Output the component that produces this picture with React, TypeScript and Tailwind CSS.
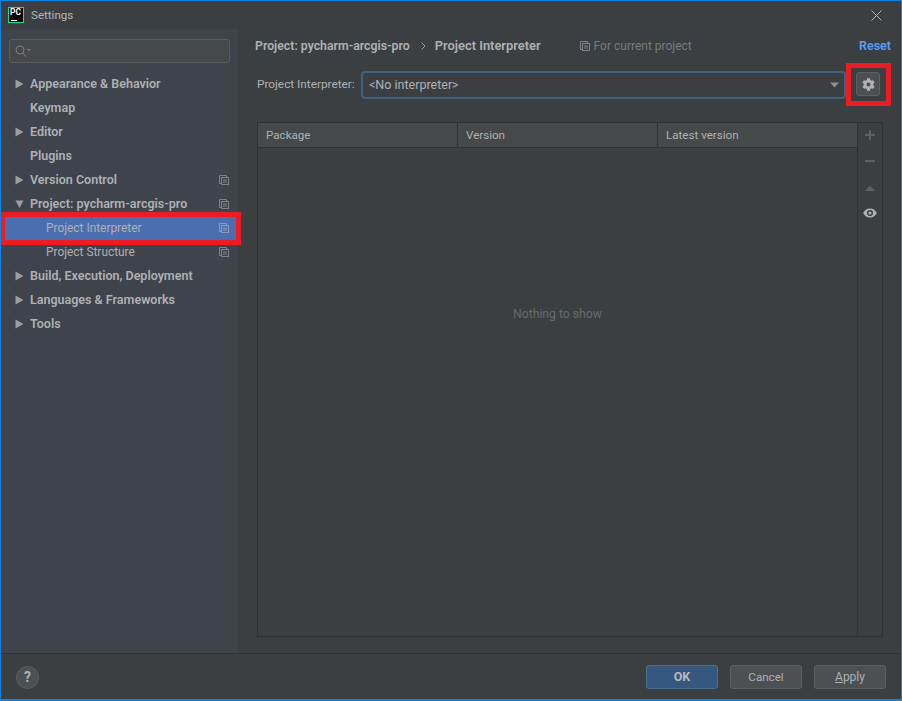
// App.tsx
import { FaCog } from "react-icons/fa";

function CopyIcon({ className = "text-[#7f8387]" }: { className?: string }) {
  return (
    <svg className={className} width="10" height="10" viewBox="0 0 10 10" fill="none" stroke="currentColor" strokeWidth="1">
      <path d="M2.5 8.5h-2v-8h7v2" />
      <rect x="2.5" y="2.5" width="7" height="7" />
      <path d="M4 5h4M4 7h4" />
    </svg>
  );
}

function Arrow({ open }: { open?: boolean }) {
  return (
    <svg width="9" height="10" viewBox="0 0 9 10" fill="#9da0a2">
      {open ? <path d="M0.500 1.500h8L4.500 9z" /> : <path d="M0.500 0.500v9L8.500 5z" />}
    </svg>
  );
}

const tree = [
  { label: "Appearance & Behavior", arrow: true },
  { label: "Keymap" },
  { label: "Editor", arrow: true },
  { label: "Plugins" },
  { label: "Version Control", arrow: true, copy: true },
  { label: "Project: pycharm-arcgis-pro", arrow: true, open: true, copy: true },
  { label: "Project Interpreter", child: true, copy: true, selected: true },
  { label: "Project Structure", child: true, copy: true },
  { label: "Build, Execution, Deployment", arrow: true },
  { label: "Languages & Frameworks", arrow: true },
  { label: "Tools", arrow: true },
];

export default function App() {
  return (
    <div className="relative w-[902px] h-[701px] flex flex-col bg-[#3c3f41] border border-[#0a84e0] border-b-2 text-[12.5px] text-[#afb1b3] font-['Roboto','Noto_Sans',sans-serif] overflow-hidden">
      {/* title bar */}
      <div className="h-[28px] shrink-0 flex items-center pl-[7px] pr-[19px]">
        <div className="relative w-[16px] h-[16px] bg-black border border-[#21d789] shrink-0 overflow-hidden">
          <span className="absolute left-[1px] top-0 text-[8.500px] leading-[9px] font-bold text-white">PC</span>
          <div className="absolute left-[2px] bottom-[1px] w-[6px] h-[1px] bg-white" />
        </div>
        <span className="ml-[7px] mt-[1px] text-[11.6px] text-[#b4b6b8]">Settings</span>
        <svg className="ml-auto" width="11" height="11" viewBox="0 0 11 11" stroke="#b5b7b9" strokeWidth="1" fill="none">
          <path d="M0.500 0.500l10 10M10.500 0.500l-10 10" />
        </svg>
      </div>

      <div className="flex-1 flex min-h-0">
        {/* sidebar */}
        <aside className="w-[237px] shrink-0 bg-[#3e434c] flex flex-col">
          <div className="mt-[10px] mb-[9px] ml-[8px] w-[221px] h-[24px] rounded-[3px] border border-[#5a5d5f] bg-[#45494a] flex items-center pl-[5px]">
            <svg width="16" height="13" viewBox="0 0 16 13" fill="none" stroke="#7b7e80" strokeWidth="1">
              <circle cx="5" cy="5" r="4" />
              <path d="M8 8l3 4" />
              <path d="M12 4h4l-2 2.500z" fill="#7b7e80" stroke="none" />
            </svg>
          </div>
          {tree.map((item) => (
            <div
              key={item.label}
              className={`h-[24px] flex items-center pr-[9px] ${item.selected ? "bg-[#4b6eaf]" : ""} ${item.child ? "pl-[45px] font-normal text-[11.9px]" : "pl-[14px] font-semibold"}`}
            >
              {!item.child && (
                <span className="w-[15px] shrink-0 flex">{item.arrow && <Arrow open={item.open} />}</span>
              )}
              <span className={`whitespace-nowrap ${item.child ? "pt-[1px]" : ""}`}>{item.label}</span>
              {item.copy && (
                <span className="ml-auto flex">
                  <CopyIcon className={item.selected ? "text-[#8a9bbd]" : "text-[#7f8387]"} />
                </span>
              )}
            </div>
          ))}
        </aside>

        {/* main */}
        <main className="flex-1 flex flex-col pl-[17px] pr-[10px] min-w-0">
          <div className="h-[34px] flex items-center">
            <span className="text-[12.3px] font-semibold whitespace-nowrap">Project: pycharm-arcgis-pro</span>
            <svg className="ml-[11px]" width="5" height="8" viewBox="0 0 5 8" fill="none" stroke="#9a9c9e">
              <path d="M0.500 0.500l3.500 3.500-3.500 3.500" />
            </svg>
            <span className="ml-[9px] text-[12.9px] font-semibold whitespace-nowrap">Project Interpreter</span>
            <span className="ml-[39px] flex"><CopyIcon /></span>
            <span className="ml-[4px] text-[12px] text-[#787a7c] whitespace-nowrap">For current project</span>
            <span className="ml-auto font-semibold text-[#589df6]">Reset</span>
          </div>

          <div className="mt-[8px] flex items-center h-[28px]">
            <span className="ml-[2px] w-[98px] text-[11.8px] whitespace-nowrap">Project Interpreter:</span>
            <div className="ml-[6px] w-[485px] h-[28px] rounded-[4px] border-2 border-[#3d6185] bg-[#3c3f41] flex items-center pl-[6px] pr-[5px]">
              <span>&lt;No interpreter&gt;</span>
              <svg className="ml-auto" width="9" height="6" viewBox="0 0 9 6" fill="#8b8e90">
                <path d="M0 0.500h9L4.500 5.500z" />
              </svg>
            </div>
            <div className="ml-[10px] mb-[2px] w-[24px] h-[24px] rounded-[3px] border border-[#5e6060] bg-[#4c5052] flex items-center justify-center">
              <FaCog className="text-[#afb1b3] text-[13px]" />
            </div>
          </div>

          {/* package table */}
          <div className="mt-[23px] ml-[2px] h-[515px] w-[626px] border border-[#2f3133] flex">
            <div className="flex-1 flex flex-col min-w-0">
              <div className="h-[25px] shrink-0 flex bg-[#45494a] border-b border-[#323232] text-[11.6px]">
                <div className="w-[200px] pl-[8px] pt-[1px] flex items-center border-r border-[#323232]">Package</div>
                <div className="w-[200px] pl-[8px] pt-[1px] flex items-center border-r border-[#323232]">Version</div>
                <div className="flex-1 pl-[8px] pt-[1px] flex items-center">Latest version</div>
              </div>
              <div className="flex-1 flex items-center justify-center pb-[155px] text-[12.2px] text-[#696b6d]">Nothing to show</div>
            </div>
            <div className="w-[25px] shrink-0 border-l border-[#323232] flex flex-col items-center pt-[6px] gap-[14px]">
              <svg width="12" height="12" viewBox="0 0 12 12" stroke="#5e6163" strokeWidth="2">
                <path d="M6 1v10M1 6h10" />
              </svg>
              <svg width="12" height="12" viewBox="0 0 12 12" stroke="#5e6163" strokeWidth="2">
                <path d="M1 6h10" />
              </svg>
              <svg width="12" height="12" viewBox="0 0 12 12" fill="#5e6163">
                <path d="M1 10L6 4.500 11 10z" />
              </svg>
              <svg width="14" height="12" viewBox="0 0 14 12" fill="#afb1b3">
                <path fillRule="evenodd" d="M7 1.500c3.200 0 5.600 2 6.800 4.500C12.600 8.500 10.200 10.500 7 10.500S1.400 8.500.2 6C1.400 3.500 3.800 1.500 7 1.500zM7 3a3 3 0 100 6 3 3 0 000-6z" />
                <circle cx="7" cy="6" r="1.600" />
              </svg>
            </div>
          </div>
        </main>
      </div>

      {/* footer */}
      <footer className="h-[46px] shrink-0 border-t border-[#323232] flex items-start pt-[11px] pl-[15px] pr-[15px]">
        <div className="mt-[1px] w-[23px] h-[23px] rounded-full border border-[#5e6060] bg-[#4c5052] flex items-center justify-center font-bold text-[14px] text-[#afb1b3]">?</div>
        <button className="ml-auto w-[72px] h-[24px] rounded-[3px] border border-[#4c708c] bg-[#365880] font-bold text-[#bbbbbb]">OK</button>
        <button className="ml-[12px] w-[72px] h-[24px] rounded-[3px] border border-[#5e6060] bg-[#4c5052] pt-[1px] text-[11.6px] text-[#afb1b3]">Cancel</button>
        <button className="ml-[12px] w-[72px] h-[24px] rounded-[3px] border border-[#5e6060] bg-[#4c5052] text-[12px] text-[#afb1b3]"><span className="underline">A</span>pply</button>
      </footer>

      {/* red annotation boxes */}
      <div className="absolute left-[-1px] top-[211px] w-[241px] h-[33px] border-[5px] border-[#ed1c24]" />
      <div className="absolute left-[845px] top-[62px] w-[45px] h-[43px] border-[5px] border-[#ed1c24]" />
    </div>
  );
}
